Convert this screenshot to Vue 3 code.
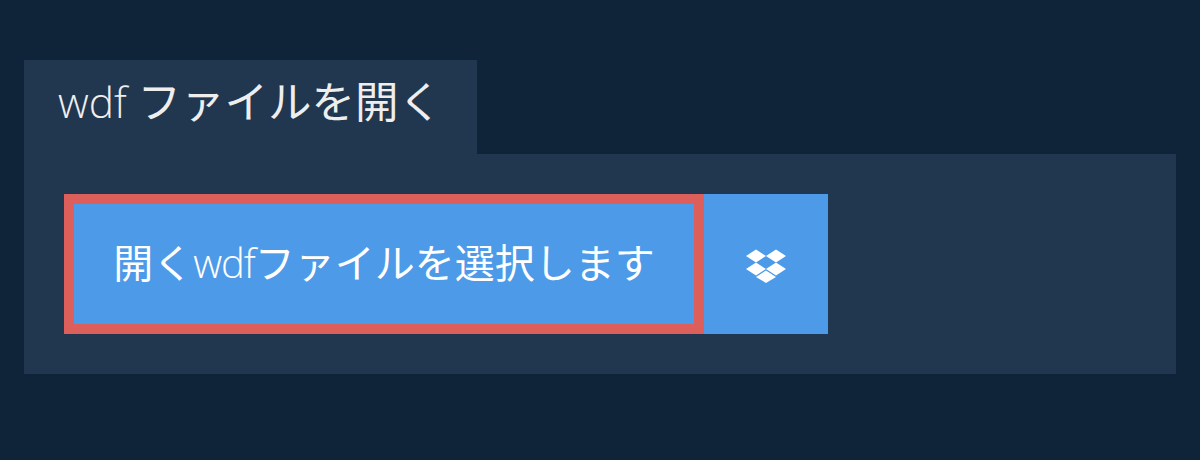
<template>
  <div class="page">
    <div class="tab"><span class="latin">wdf</span> ファイルを開く</div>
    <div class="panel">
      <div class="picker">
        <button class="select-btn">開く<span class="latin">wdf</span>ファイルを選択します</button>
        <button class="dropbox-btn" aria-label="Dropbox">
          <svg xmlns="http://www.w3.org/2000/svg" width="40" height="34" viewBox="0 0 40 34" fill="#fff">
            <path d="M10 0.5L20 7L10 13.5L0 7Z" />
            <path d="M30 0.5L40 7L30 13.5L20 7Z" />
            <path d="M10 13.5L20 20L10 26.5L0 20Z" />
            <path d="M30 13.5L40 20L30 26.5L20 20Z" />
            <path d="M20 21.5L30 28L20 34L10 28Z" />
          </svg>
        </button>
      </div>
    </div>
  </div>
</template>

<script setup>
</script>

<style>
body {
  background: #0f2439;
}
</style>

<style scoped>
.page {
  height: 460px;
  box-sizing: border-box;
  padding: 60px 24px 0;
  background: #0f2439;
  font-family: "Noto Sans CJK JP", sans-serif;
  font-weight: 400;
}

.latin {
  font-family: "Open Sans", sans-serif;
  font-weight: 300;
}

.tab {
  width: 453px;
  height: 94px;
  box-sizing: border-box;
  padding: 13px 0 0 34px;
  background: #21364f;
  color: #eeeeee;
  font-size: 43.5px;
  line-height: 54px;
  word-spacing: 1px;
}

.tab .latin {
  font-size: 42.5px;
}

.panel {
  height: 220px;
  box-sizing: border-box;
  padding: 40px;
  background: #21364f;
}

.picker {
  display: flex;
  height: 140px;
}

.select-btn {
  width: 640px;
  box-sizing: border-box;
  border: 10px solid #dd5f5c;
  background: #4c9ae8;
  color: #fff;
  font: inherit;
  font-size: 40px;
  padding: 0 0 6px;
}

.select-btn .latin {
  letter-spacing: -1px;
}

.dropbox-btn {
  width: 124px;
  border: none;
  background: #4c9ae8;
  padding: 4px 0 0;
  display: flex;
  align-items: center;
  justify-content: center;
}
</style>
